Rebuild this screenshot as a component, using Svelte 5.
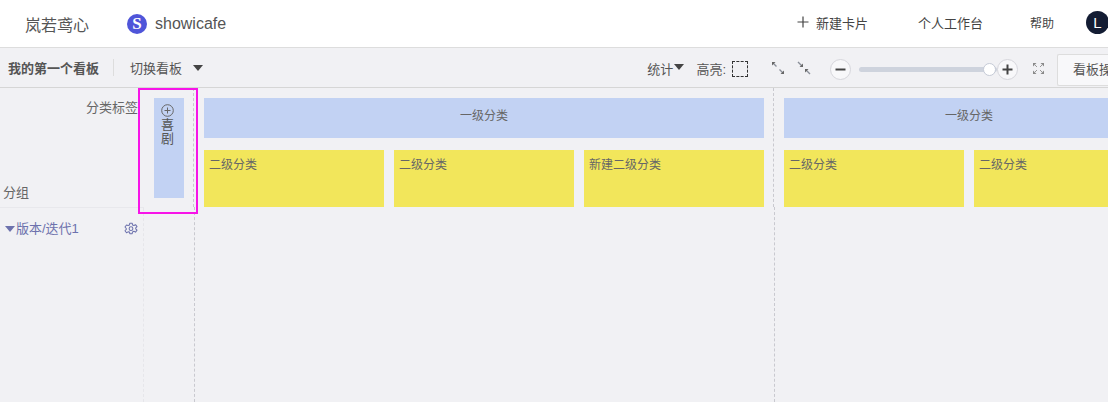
<script lang="ts">
	const groups = [
		{ title: '一级分类', subs: ['二级分类', '二级分类', '新建二级分类'] },
		{ title: '一级分类', subs: ['二级分类', '二级分类'] }
	];
</script>

<div class="page">
	<header class="topbar">
		<span class="brand">岚若鸢心</span>
		<span class="project">
			<span class="project-logo">S</span>
			<span class="project-name">showicafe</span>
		</span>
		<nav class="top-actions">
			<span class="new-card">
				<svg width="12" height="12" viewBox="0 0 12 12"><path d="M6 0.5v11M0.5 6h11" stroke="#444" stroke-width="1.2" fill="none" /></svg>
				新建卡片
			</span>
			<span class="workbench">个人工作台</span>
			<span class="help">帮助</span>
			<span class="avatar">L</span>
		</nav>
	</header>

	<div class="toolbar">
		<strong class="board-name">我的第一个看板</strong>
		<span class="divider"></span>
		<span class="switch">切换看板</span>
		<span class="caret switch-caret"></span>
		<div class="tools">
			<span class="stat">统计<span class="caret"></span></span>
			<span class="highlight">高亮:<span class="dashed-box"></span></span>
			<svg class="arrows" width="14" height="14" viewBox="0 0 14 14">
				<path d="M2 2l3.500 3.500M8.500 8.500L12 12" stroke="#8a8f99" stroke-width="1.400" fill="none" />
				<path d="M1 1h3.500L1 4.500zM13 13H9.500L13 9.500z" fill="#666" />
			</svg>
			<svg class="arrows second" width="14" height="14" viewBox="0 0 14 14">
				<path d="M1 1l4 4M9 9l4 4" stroke="#8a8f99" stroke-width="1.400" fill="none" />
				<path d="M6 6H2.500L6 2.500zM8 8h3.500L8 11.500z" fill="#666" />
			</svg>
			<span class="zoom-btn minus">
				<svg width="11" height="11" viewBox="0 0 11 11"><path d="M0.5 5.5h10" stroke="#444" stroke-width="2" /></svg>
			</span>
			<span class="slider"><span class="knob"></span></span>
			<span class="zoom-btn">
				<svg width="11" height="11" viewBox="0 0 11 11"><path d="M0.5 5.5h10M5.5 0.5v10" stroke="#444" stroke-width="2" /></svg>
			</span>
			<svg class="fullscreen" width="13" height="13" viewBox="0 0 13 13">
				<path d="M1 1h3.500L1 4.500zM12 1H8.500L12 4.500zM1 12h3.500L1 8.500zM12 12H8.500L12 8.500z" fill="#888" />
				<path d="M2 2l3 3M11 2L8 5M2 11l3-3M11 11L8 8" stroke="#999" stroke-width="1" fill="none" />
			</svg>
			<span class="board-ops">看板操作</span>
		</div>
	</div>

	<div class="board">
		<aside class="side">
			<div class="side-head">
				<span class="label-title">分类标签</span>
				<span class="group-title">分组</span>
			</div>
			<div class="lane-title">
				<span class="lane-caret"></span>
				<span class="lane-name">版本/迭代1</span>
				<svg class="gear" width="14" height="14" viewBox="0 0 24 24" fill="none" stroke="#6d72ad" stroke-width="1.800">
					<path d="M10 2h4l.6 3 2.400 1.100 2.700-1.500 2.600 3.400-2.200 2.200v1.600l2.200 2.200-2.600 3.400-2.700-1.500-2.400 1.100-.6 3h-4l-.6-3L7 16.900l-2.700 1.500-2.600-3.400 2.200-2.200v-1.600L1.700 8.600l2.600-3.400L7 6.100 9.400 5z" stroke-linejoin="round" />
					<circle cx="12" cy="11.500" r="3.200" />
				</svg>
			</div>
		</aside>

		<section class="column tag-col">
			<div class="col-head">
				<div class="tag">
					<svg width="13" height="13" viewBox="0 0 13 13" fill="none" stroke="#666" stroke-width="1">
						<circle cx="6.500" cy="6.500" r="5.800" />
						<path d="M3.500 6.500h6M6.500 3.500v6" />
					</svg>
					<span class="tag-text">喜<br />剧</span>
				</div>
			</div>
			<div class="col-body"></div>
		</section>

		{#each groups as group}
			<section class="column group">
				<div class="col-head">
					<div class="primary"><span>{group.title}</span></div>
					<div class="subs">
						{#each group.subs as sub}
							<div class="sub">{sub}</div>
						{/each}
					</div>
				</div>
				<div class="col-body"></div>
			</section>
		{/each}

		<div class="marker"></div>
	</div>
</div>

<style>
	:global(body) {
		margin: 0;
		overflow: hidden;
	}
	.page {
		width: 1108px;
		height: 402px;
		overflow: hidden;
		background: #f1f1f4;
		color: #555;
		font-family: 'Liberation Sans', 'Noto Sans CJK SC', sans-serif;
		font-size: 13px;
	}
	.topbar {
		display: flex;
		align-items: center;
		height: 47px;
		background: #fff;
		border-bottom: 1px solid #ddd;
		white-space: nowrap;
	}
	.brand {
		margin-left: 25px;
		font-size: 16px;
		color: #555;
	}
	.project {
		display: flex;
		align-items: center;
		gap: 8px;
		margin-left: 38px;
	}
	.project-logo {
		display: flex;
		align-items: center;
		justify-content: center;
		width: 20px;
		height: 20px;
		border-radius: 50%;
		background: #4f55d9;
		color: #fff;
		font-family: 'Liberation Serif', serif;
		font-size: 17px;
		font-weight: 700;
	}
	.project-name {
		font-size: 16px;
		color: #555;
	}
	.top-actions {
		display: flex;
		align-items: center;
		margin-top: -3px;
		margin-left: auto;
		color: #444;
	}
	.new-card {
		display: flex;
		align-items: center;
		gap: 7px;
	}
	.workbench {
		margin-left: 50px;
	}
	.help {
		margin-left: 47px;
		font-size: 12px;
	}
	.avatar {
		display: flex;
		align-items: center;
		justify-content: center;
		flex: none;
		width: 23px;
		height: 23px;
		margin: 0 -1px 0 32px;
		border-radius: 50%;
		background: #131c33;
		color: #fff;
		font-size: 15px;
	}
	.toolbar {
		display: flex;
		align-items: center;
		height: 39px;
		border-bottom: 1px solid #d6d6d6;
		white-space: nowrap;
	}
	.board-name {
		margin-left: 8px;
		color: #555;
		font-weight: 700;
	}
	.divider {
		width: 1px;
		height: 17px;
		margin: 0 16px 0 14px;
		background: #ddd;
	}
	.caret {
		display: inline-block;
		border-left: 5px solid transparent;
		border-right: 5px solid transparent;
		border-top: 6px solid #444;
	}
	.switch-caret {
		margin-left: 11px;
	}
	.tools {
		display: flex;
		align-items: center;
		margin-top: 4px;
		margin-left: auto;
	}
	.stat {
		display: flex;
		align-items: center;
		gap: 1px;
		margin-top: -2px;
	}
	.stat .caret {
		margin-bottom: 3px;
	}
	.highlight {
		display: flex;
		align-items: center;
		gap: 6px;
		margin-top: -2px;
		margin-left: 12px;
	}
	.dashed-box {
		width: 14px;
		height: 14px;
		border: 1px dashed #333;
	}
	.arrows {
		margin-top: -3px;
		margin-left: 23px;
	}
	.arrows.second {
		margin-left: 12px;
	}
	.zoom-btn {
		display: flex;
		align-items: center;
		justify-content: center;
		box-sizing: border-box;
		width: 21px;
		height: 21px;
		border: 1px solid #d6d6dc;
		border-radius: 50%;
		background: #f8f8fa;
	}
	.zoom-btn.minus {
		margin: 0 8px 0 19px;
	}
	.slider {
		position: relative;
		display: block;
		width: 138px;
		height: 5px;
		border-radius: 3px;
		background: #ced3dd;
	}
	.knob {
		position: absolute;
		top: -4px;
		right: 1px;
		box-sizing: border-box;
		width: 13px;
		height: 13px;
		border: 1px solid #c5cad6;
		border-radius: 50%;
		background: #fff;
	}
	.fullscreen {
		margin-top: -3px;
		margin-left: 14px;
	}
	.board-ops {
		display: block;
		box-sizing: border-box;
		width: 80px;
		height: 32px;
		margin: 0 -29px 0 12px;
		padding-left: 15px;
		border: 1px solid #ddd;
		border-right: 0;
		border-radius: 2px;
		background: #f8f8fa;
		line-height: 30px;
		overflow: hidden;
	}
	.board {
		position: relative;
		display: flex;
		height: 314px;
		white-space: nowrap;
	}
	.side {
		display: flex;
		flex: none;
		flex-direction: column;
		width: 144px;
		height: 100%;
	}
	.side-head {
		display: flex;
		flex-direction: column;
		justify-content: space-between;
		box-sizing: border-box;
		height: 120px;
		padding: 12px 6px 6px 3px;
		border-bottom: 1px solid #e8e8ec;
		color: #666;
	}
	.label-title {
		align-self: flex-end;
		margin-top: -3px;
	}
	.lane-title {
		display: flex;
		flex: 1;
		align-items: flex-start;
		padding: 10px 5px 0;
		border-right: 1px dashed #e6e6ea;
		color: #6d72ad;
	}
	.lane-caret {
		margin: 8px 1px 0 0;
		border-left: 5px solid transparent;
		border-right: 5px solid transparent;
		border-top: 6px solid #6d72ad;
	}
	.gear {
		margin-left: auto;
		margin-top: 4px;
	}
	.column {
		display: flex;
		flex: none;
		flex-direction: column;
		height: 100%;
	}
	.col-head {
		box-sizing: border-box;
		height: 119px;
		margin-right: 1px;
		padding: 10px 9px 0;
		border-right: 1px dashed #c9c9cf;
	}
	.col-body {
		flex: 1;
		border-right: 1px dashed #c9c9cf;
	}
	.tag-col .col-head {
		padding-left: 10px;
		padding-right: 0;
	}
	.tag-col {
		width: 51px;
	}
	.tag {
		display: flex;
		flex-direction: column;
		align-items: center;
		gap: 1px;
		box-sizing: border-box;
		width: 30px;
		height: 100px;
		padding: 6px 3px 0 0;
		background: #c2d2f3;
		color: #555;
	}
	.tag-text {
		line-height: 14px;
		text-align: center;
	}
	.primary {
		display: flex;
		align-items: center;
		justify-content: center;
		box-sizing: border-box;
		height: 40px;
		padding-bottom: 8px;
		background: #c2d2f3;
		color: #666;
		font-size: 12px;
	}
	.group .col-head {
		padding-right: 9px;
	}
	.subs {
		display: flex;
		gap: 10px;
		margin-top: 12px;
	}
	.sub {
		flex: none;
		box-sizing: border-box;
		width: 180px;
		height: 57px;
		padding: 5px;
		background: #f2e65b;
		color: #666;
		font-size: 12px;
	}
	.marker {
		position: absolute;
		top: 0;
		left: 138px;
		box-sizing: border-box;
		width: 60px;
		height: 126px;
		border: 2px solid #f714e8;
	}
</style>
